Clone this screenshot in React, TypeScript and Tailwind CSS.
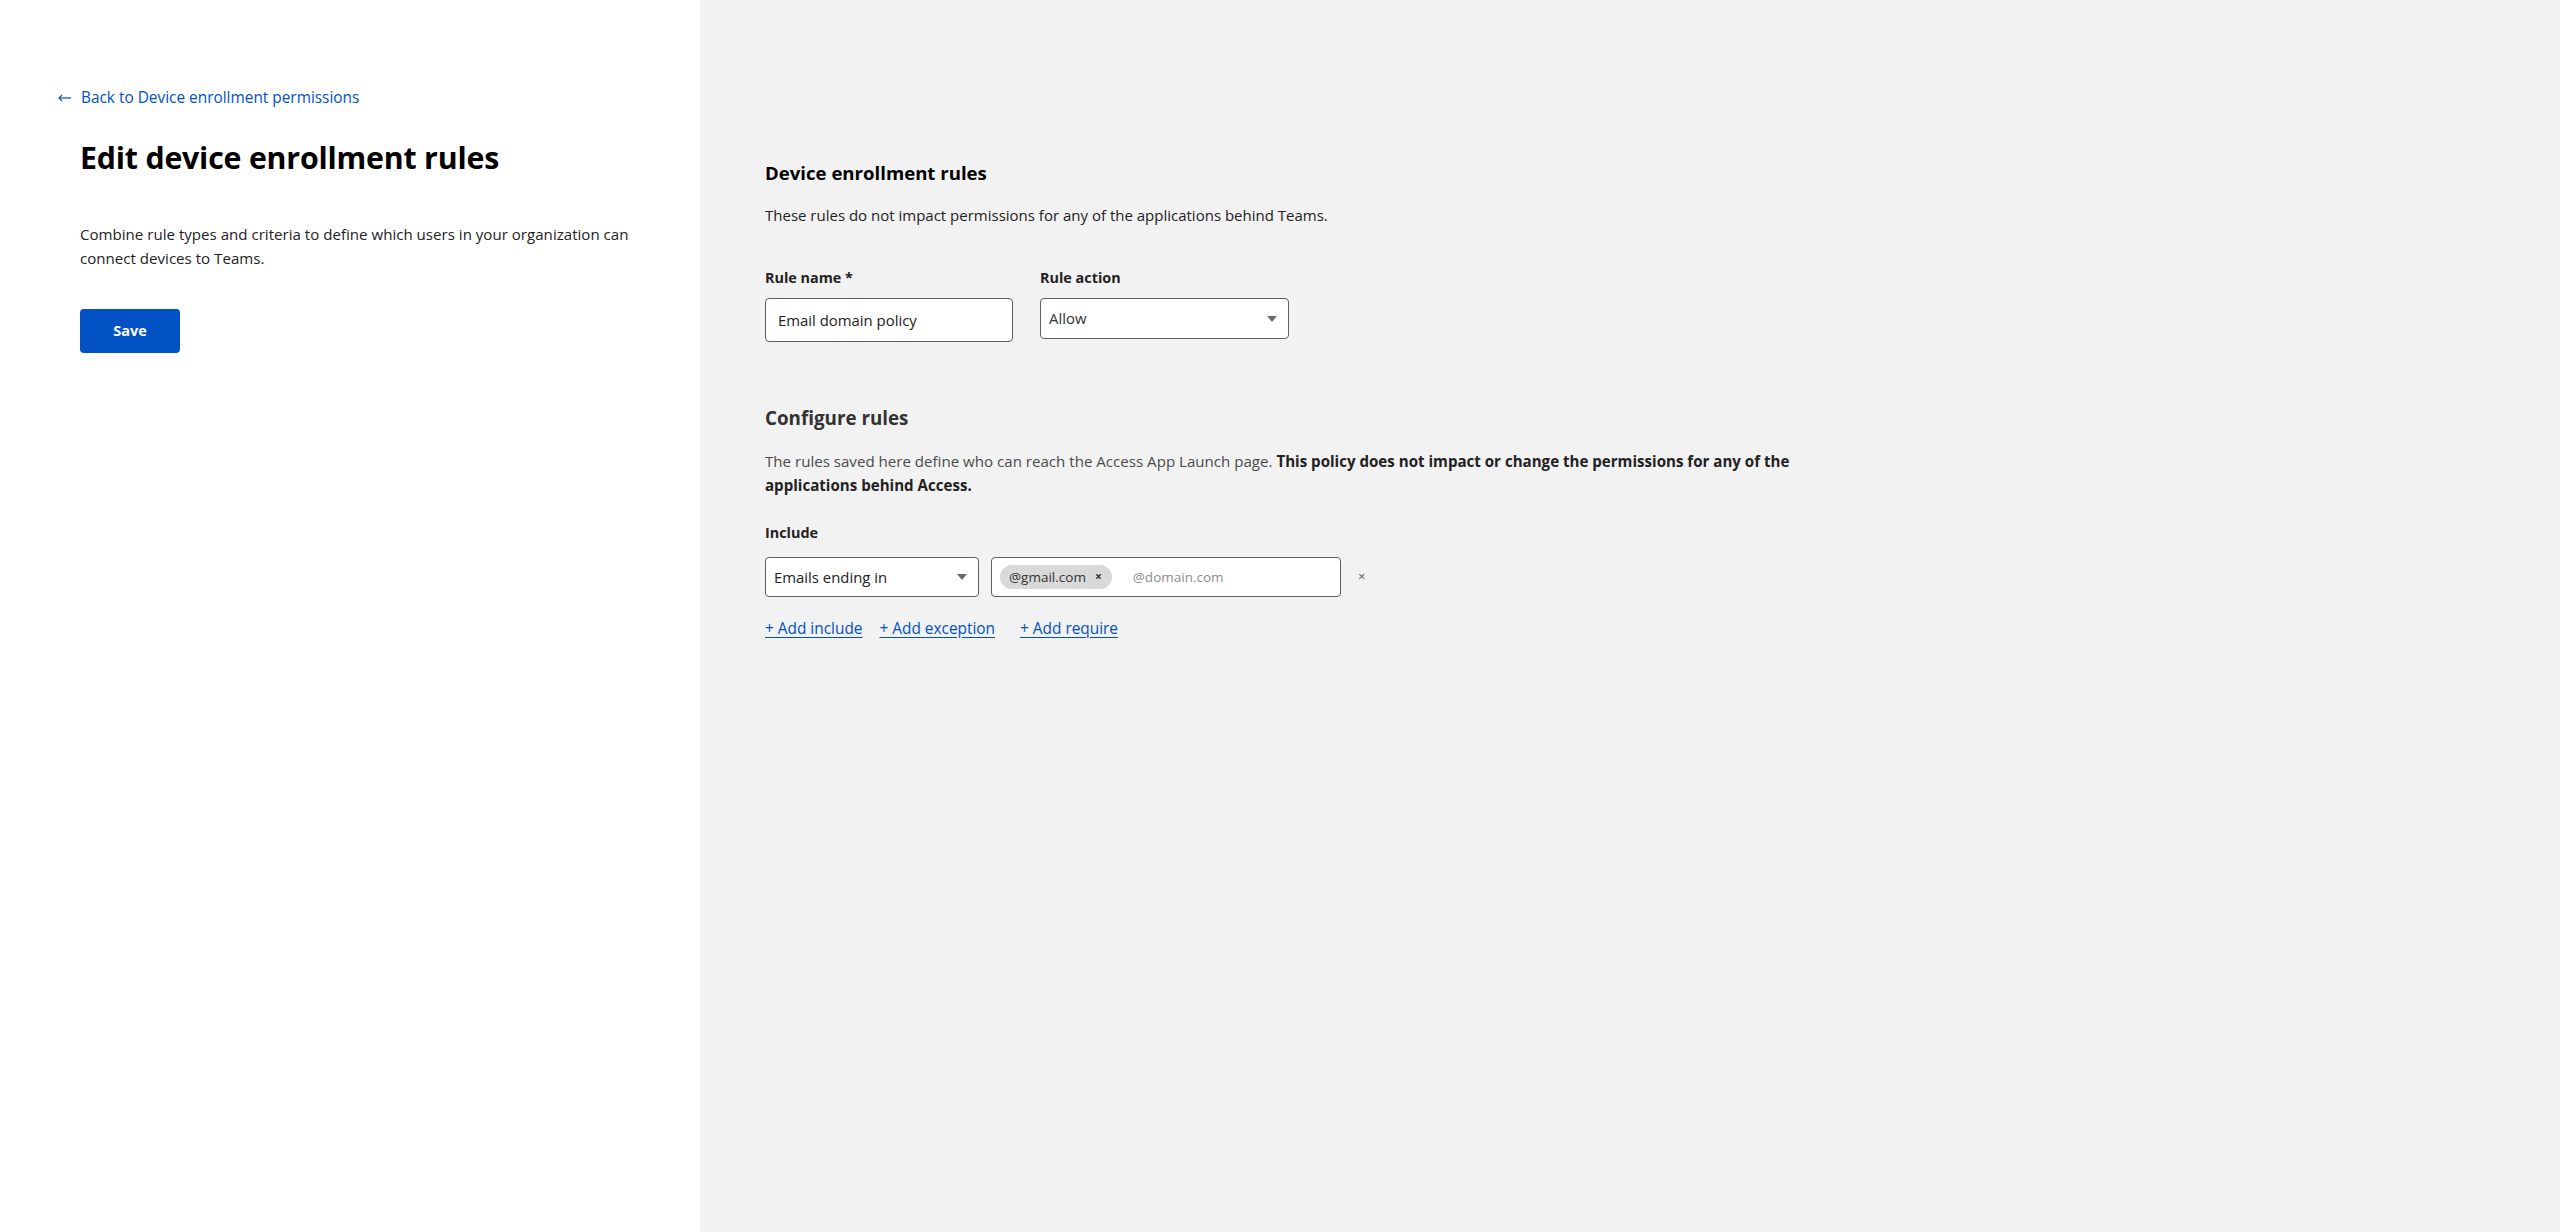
const font = { fontFamily: '"Open Sans", "Noto Sans", Arial, sans-serif' }

function Caret() {
  return (
    <svg width="10" height="6" viewBox="0 0 10 6" className="shrink-0">
      <path d="M0 0 L10 0 L5 6 Z" fill="#6b6b6b" />
    </svg>
  )
}

function BackArrow() {
  return (
    <svg width="13" height="8" viewBox="0 0 13 8" className="shrink-0" fill="none" stroke="#0051c3" strokeWidth="1.2">
      <path d="M13 4 H1" />
      <path d="M4 1 L1 4 L4 7" />
    </svg>
  )
}

export default function App() {
  return (
    <div className="flex min-h-screen w-full text-[#1f1f1f]" style={font}>
      {/* Left side: title + save */}
      <aside className="w-[700px] shrink-0 bg-white pl-[80px] pr-[40px] pt-[86px]">
        <a href="#" className="-ml-[22px] flex items-center gap-[10px] text-[15.4px] leading-[24px] text-[#0051c3]">
          <BackArrow />
          <span>Back to Device enrollment permissions</span>
        </a>
        <h1 className="mt-[28px] text-[30.3px] font-bold leading-[40px] tracking-[-0.2px] text-black">
          Edit device enrollment rules
        </h1>
        <p className="mt-[44px] max-w-[585px] text-[15.1px] leading-[24px] text-[#222]">
          Combine rule types and criteria to define which users in your organization can connect devices to Teams.
        </p>
        <button className="mt-[39px] h-[44px] w-[100px] rounded-[4px] bg-[#0051c3] text-[14.5px] font-bold text-white">
          Save
        </button>
      </aside>

      {/* Right side: rule form */}
      <main className="flex-1 bg-[#f2f2f2] pl-[65px] pt-[159px]">
        <h2 className="text-[18.6px] font-bold leading-[28px] text-black">Device enrollment rules</h2>
        <p className="mt-[16px] text-[15px] leading-[24px] text-[#222]">
          These rules do not impact permissions for any of the applications behind Teams.
        </p>

        <div className="mt-[39px] flex items-start gap-[27px]">
          <div className="flex flex-col">
            <label className="text-[14.4px] font-bold leading-[24px] text-[#222]">Rule name *</label>
            <div className="mt-[8px] flex h-[44px] w-[248px] items-center rounded-[4px] border border-[#5f5f5f] bg-white px-[12px] text-[14.9px] text-[#222]">
              Email domain policy
            </div>
          </div>
          <div className="flex flex-col">
            <label className="text-[14.4px] font-bold leading-[24px] text-[#222]">Rule action</label>
            <div className="mt-[8px] flex h-[41px] w-[249px] items-center justify-between rounded-[4px] border border-[#5f5f5f] bg-white pl-[8px] pr-[11px] text-[14.9px] text-[#333]">
              <span>Allow</span>
              <Caret />
            </div>
          </div>
        </div>

        <h2 className="mt-[62px] text-[18.8px] font-bold leading-[28px] text-[#333]">Configure rules</h2>
        <p className="mt-[17px] max-w-[1090px] text-[15.1px] leading-[24px] text-[#4a4a4a]">
          The rules saved here define who can reach the Access App Launch page.{' '}
          <strong className="font-bold text-[#222]">
            This policy does not impact or change the permissions for any of the applications behind Access.
          </strong>
        </p>

        <div className="mt-[24px] text-[14.4px] font-bold leading-[24px] text-[#222]">Include</div>

        <div className="mt-[12px] flex items-center">
          <div className="flex h-[40px] w-[214px] items-center justify-between rounded-[4px] border border-[#5f5f5f] bg-white pl-[8px] pr-[11px] text-[14.9px] text-[#222]">
            <span>Emails ending in</span>
            <Caret />
          </div>
          <div className="ml-[12px] flex h-[40px] w-[350px] items-center rounded-[4px] border border-[#5f5f5f] bg-white pl-[8px]">
            <span className="flex h-[24px] items-center gap-[9px] rounded-full bg-[#d9d9d9] pl-[9px] pr-[10px] text-[13.5px] text-[#333]">
              @gmail.com
              <span className="text-[12px] font-bold leading-none text-[#333]">×</span>
            </span>
            <span className="ml-[21px] text-[13.5px] text-[#8c8c8c]">@domain.com</span>
          </div>
          <span className="ml-[17px] text-[13px] text-[#555]">×</span>
        </div>

        <div className="mt-[20px] flex items-center text-[15.4px] leading-[24px] text-[#0051c3]">
          <a href="#" className="underline underline-offset-[3px]">+ Add include</a>
          <a href="#" className="ml-[17px] underline underline-offset-[3px]">+ Add exception</a>
          <a href="#" className="ml-[25px] underline underline-offset-[3px]">+ Add require</a>
        </div>
      </main>
    </div>
  )
}
